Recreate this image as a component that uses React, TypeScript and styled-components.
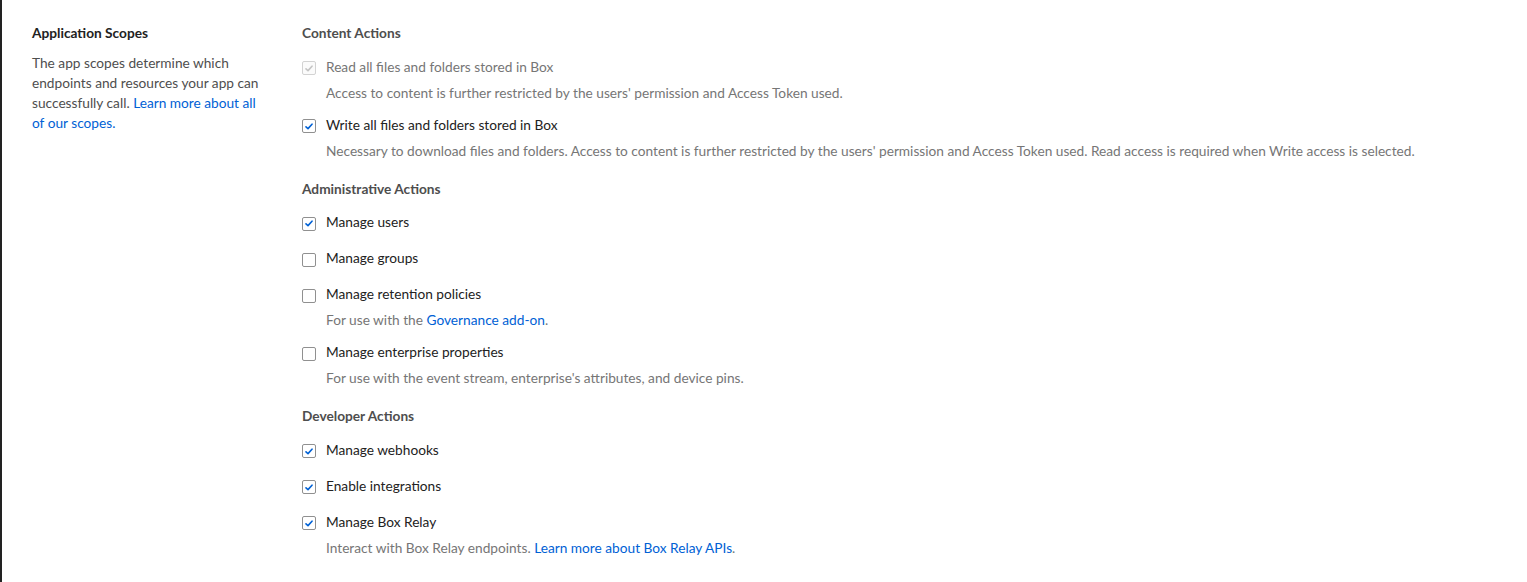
import React from "react";
import styled, { createGlobalStyle } from "styled-components";

const Global = createGlobalStyle`
  html, body { margin: 0; padding: 0; background: #fff; }
  body { font-family: Lato, "Open Sans", sans-serif; font-size: 13.7px; color: #222; -webkit-font-smoothing: antialiased; }
`;

const Page = styled.div`
  display: flex;
  min-height: 582px;
  box-sizing: border-box;
  border-left: 2px solid #222;
  padding: 23px 0 0 30px;
`;

const Side = styled.div`
  width: 232px;
  flex: none;
  margin-right: 38px;
`;

const SideTitle = styled.div`
  font-weight: 700;
  line-height: 20px;
  color: #222;
  margin-bottom: 10px;
`;

const SideText = styled.p`
  margin: 0;
  line-height: 20px;
  color: #4e4e4e;
`;

const Link = styled.a`
  color: #0061d5;
  text-decoration: none;
`;

const Main = styled.div`
  flex: 1;
  display: flex;
  flex-direction: column;
  gap: 6px;
`;

const Section = styled.section`
  display: flex;
  flex-direction: column;
`;

const SectionTitle = styled.div`
  font-weight: 700;
  line-height: 20px;
  color: #4e4e4e;
  margin-bottom: 13.5px;
`;

const Item = styled.div<{ $hasDesc: boolean }>`
  margin-bottom: ${(p) => (p.$hasDesc ? 12 : 16)}px;
`;

const Row = styled.label`
  display: flex;
  align-items: center;
  gap: 10px;
  line-height: 20px;
`;

const Box = styled.span<{ $checked: boolean; $disabled: boolean }>`
  width: 14px;
  height: 14px;
  flex: none;
  box-sizing: border-box;
  border: 1px solid ${(p) => (p.$disabled ? "#d3d3d3" : "#909090")};
  border-radius: 2px;
  background: ${(p) => (p.$disabled ? "#fbfbfb" : "#fff")};
  display: flex;
  align-items: center;
  justify-content: center;
  margin-top: 3px;
`;

const Label = styled.span<{ $disabled: boolean }>`
  color: ${(p) => (p.$disabled ? "#767676" : "#222")};
`;

const Desc = styled.div`
  margin: 6px 0 0 24px;
  line-height: 20px;
  color: #767676;
`;

type ItemDef = {
  label: string;
  checked?: boolean;
  disabled?: boolean;
  desc?: React.ReactNode;
};

const Check = ({ color }: { color: string }) => (
  <svg width="8" height="7" viewBox="0 0 8 7">
    <path d="M1 3.8 L3 5.6 L7 1.2" fill="none" stroke={color} strokeWidth="1.6" strokeLinecap="round" strokeLinejoin="round" />
  </svg>
);

const Scope = ({ item }: { item: ItemDef }) => (
  <Item $hasDesc={!!item.desc}>
    <Row>
      <Box $checked={!!item.checked} $disabled={!!item.disabled}>
        {item.checked && <Check color={item.disabled ? "#c4c4c4" : "#0061d5"} />}
      </Box>
      <Label $disabled={!!item.disabled}>{item.label}</Label>
    </Row>
    {item.desc && <Desc>{item.desc}</Desc>}
  </Item>
);

const sections: { title: string; items: ItemDef[] }[] = [
  {
    title: "Content Actions",
    items: [
      {
        label: "Read all files and folders stored in Box",
        checked: true,
        disabled: true,
        desc: "Access to content is further restricted by the users' permission and Access Token used.",
      },
      {
        label: "Write all files and folders stored in Box",
        checked: true,
        desc: "Necessary to download files and folders. Access to content is further restricted by the users' permission and Access Token used. Read access is required when Write access is selected.",
      },
    ],
  },
  {
    title: "Administrative Actions",
    items: [
      { label: "Manage users", checked: true },
      { label: "Manage groups" },
      {
        label: "Manage retention policies",
        desc: (
          <>
            For use with the <Link href="#">Governance add-on</Link>.
          </>
        ),
      },
      {
        label: "Manage enterprise properties",
        desc: "For use with the event stream, enterprise's attributes, and device pins.",
      },
    ],
  },
  {
    title: "Developer Actions",
    items: [
      { label: "Manage webhooks", checked: true },
      { label: "Enable integrations", checked: true },
      {
        label: "Manage Box Relay",
        checked: true,
        desc: (
          <>
            Interact with Box Relay endpoints. <Link href="#">Learn more about Box Relay APIs</Link>.
          </>
        ),
      },
    ],
  },
];

export default function App() {
  return (
    <>
      <Global />
      <Page>
        <Side>
          <SideTitle>Application Scopes</SideTitle>
          <SideText>
            The app scopes determine which endpoints and resources your app can successfully call.{" "}
            <Link href="#">Learn more about all of our scopes.</Link>
          </SideText>
        </Side>
        <Main>
          {sections.map((s) => (
            <Section key={s.title}>
              <SectionTitle>{s.title}</SectionTitle>
              {s.items.map((it) => (
                <Scope key={it.label} item={it} />
              ))}
            </Section>
          ))}
        </Main>
      </Page>
    </>
  );
}
